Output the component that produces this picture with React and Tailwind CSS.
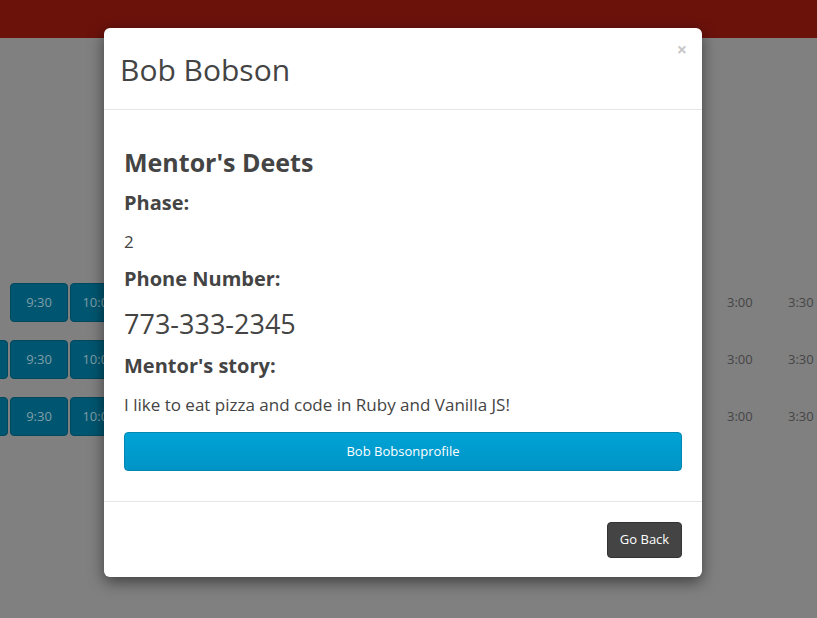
import React from 'react'

const font = { fontFamily: '"Open Sans", "Liberation Sans", sans-serif' }

function Slot({ children }) {
  return (
    <div className="flex w-[58px] shrink-0 items-center justify-center rounded-[4px] border border-[#00485e] bg-[#005670] text-[13px] text-[#7f9ea8]">
      {children}
    </div>
  )
}

function SlotRow({ lead }) {
  return (
    <div className="flex h-[39px] items-stretch">
      <div className={lead ? 'flex min-w-0 flex-1 gap-[2px] -ml-[50px]' : 'flex min-w-0 flex-1 gap-[2px] pl-[10px]'}>
        {lead && <Slot>9:00</Slot>}
        <Slot>9:30</Slot>
        <Slot>10:00</Slot>
      </div>
      <div className="flex w-[90px] shrink-0 items-center whitespace-nowrap text-[13px] text-[#454545]">
        <span className="w-[61px] shrink-0">3:00</span>
        <span className="w-[61px] shrink-0">3:30</span>
      </div>
    </div>
  )
}

export default function App() {
  return (
    <div className="relative h-[618px] w-[817px] overflow-hidden bg-[#808080]" style={font}>
      <div className="h-[38px] bg-[#6b120b]" />
      <div className="flex flex-col gap-[18px] pt-[245px]">
        <SlotRow />
        <SlotRow lead />
        <SlotRow lead />
      </div>

      <div className="absolute left-[104px] top-[28px] w-[598px] rounded-[6px] bg-white shadow-[0_5px_15px_rgba(0,0,0,0.5)]">
        <div className="relative border-b border-[#e5e5e5] px-[16px] pb-[19px] pt-[22px]">
          <h1 className="text-[30px] leading-[40px] text-[#444]">Bob Bobson</h1>
          <span className="absolute right-[15px] top-[12px] text-[18px] font-bold leading-none text-[#c8c8c8]">×</span>
        </div>
        <div className="px-[20px] pb-[30px] pt-[20px] text-[#444]">
          <h3 className="mt-[18px] text-[25px] font-bold leading-[28px]">Mentor's Deets</h3>
          <h4 className="mt-[15px] text-[20px] font-bold leading-[24px]">Phase:</h4>
          <p className="mt-[15px] text-[17px] leading-[24px]">2</p>
          <h4 className="mt-[13px] text-[20px] font-bold leading-[24px]">Phone Number:</h4>
          <p className="mt-[15px] text-[27px] leading-[36px]">773-333-2345</p>
          <h4 className="mt-[12px] text-[20px] font-bold leading-[24px]">Mentor's story:</h4>
          <p className="mt-[15px] text-[17px] leading-[24px]">I like to eat pizza and code in Ruby and Vanilla JS!</p>
          <button className="mt-[15px] block h-[39px] w-full rounded-[4px] border border-[#0086b2] bg-gradient-to-b from-[#00a3d6] to-[#0094c6] text-[13px] text-white">Bob Bobsonprofile</button>
        </div>
        <div className="flex justify-end border-t border-[#e5e5e5] px-[20px] pb-[19px] pt-[20px]">
          <button className="h-[36px] w-[75px] rounded-[4px] border border-[#333] bg-[#444] text-[13px] text-white">Go Back</button>
        </div>
      </div>
    </div>
  )
}
